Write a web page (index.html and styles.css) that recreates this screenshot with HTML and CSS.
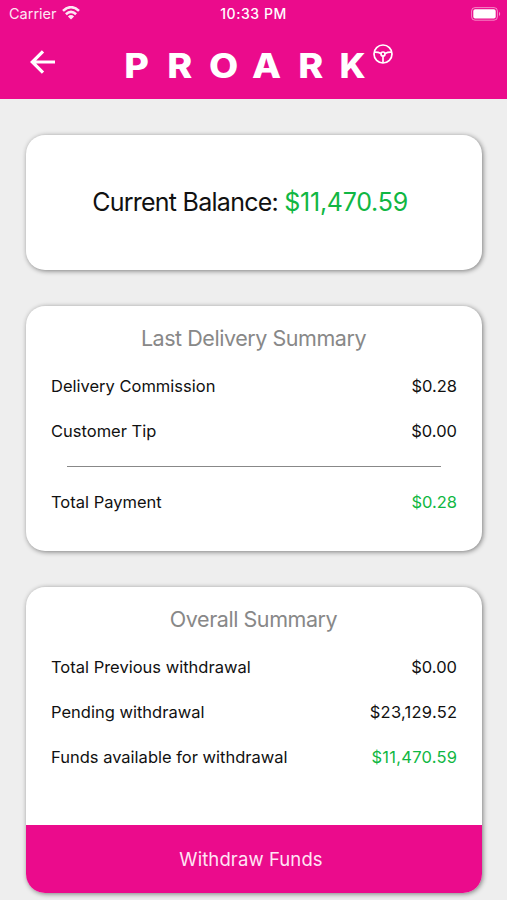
FILE: index.html
```html
<!DOCTYPE html>
<html lang="en">
<head>
<meta charset="utf-8">
<meta name="viewport" content="width=device-width, initial-scale=1">
<title>Proark</title>
<link rel="stylesheet" href="styles.css">
</head>
<body>
<header class="header">
  <div class="status">
    <div class="carrier"><span>Carrier</span>
      <svg class="wifi" width="18" height="14" viewBox="0 0 18 14" fill="none" stroke="#fff" stroke-width="2.6"><path d="M1 4.9Q9-2.5 17 4.9M3.9 8.2Q9 3.6 14.1 8.2"/><path d="M9 13.6 5.9 10.4Q9 7.8 12.1 10.4Z" fill="#fff" stroke="none"/></svg>
    </div>
    <div class="time">10:33 PM</div>
    <svg class="battery" width="30" height="14" viewBox="0 0 30 14"><rect x=".6" y=".6" width="25.8" height="12.6" rx="3.4" fill="none" stroke="#fff" stroke-opacity=".5"/><rect x="2.3" y="2.3" width="22.4" height="9.2" rx="1.8" fill="#fff"/><path d="M28 4.8q2.4 2.2 0 4.4z" fill="#fff" fill-opacity=".55"/></svg>
  </div>
  <div class="nav">
    <svg class="back" width="26" height="24" viewBox="0 0 26 24" fill="none" stroke="#fff" stroke-width="3.2"><path d="M25 12H2.5M13 1.3 2.3 12 13 22.7"/></svg>
    <div class="logo"><span>P</span><span>R</span><span>O</span><span>A</span><span>R</span><span>K</span></div>
    <svg class="wheel" width="20" height="20" viewBox="0 0 20 20" fill="none" stroke="#fff" stroke-width="1.7"><circle cx="10" cy="10" r="9"/><circle cx="10" cy="10" r="2"/><path d="M1.3 8.2Q5 8 8 9.5M18.7 8.2Q15 8 12 9.5M10 12V19"/></svg>
  </div>
</header>
<main class="content">
  <section class="card balance"><p>Current Balance: <span class="green">$11,470.59</span></p></section>
  <section class="card delivery">
    <h2>Last Delivery Summary</h2>
    <div class="row"><span>Delivery Commission</span><span class="amount">$0.28</span></div>
    <div class="row"><span>Customer Tip</span><span class="amount">$0.00</span></div>
    <hr>
    <div class="row"><span>Total Payment</span><span class="amount green">$0.28</span></div>
  </section>
  <section class="card overall">
    <h2>Overall Summary</h2>
    <div class="row"><span>Total Previous withdrawal</span><span class="amount">$0.00</span></div>
    <div class="row"><span>Pending withdrawal</span><span class="amount wide">$23,129.52</span></div>
    <div class="row"><span>Funds available for withdrawal</span><span class="amount wide green">$11,470.59</span></div>
    <button class="withdraw">Withdraw Funds</button>
  </section>
</main>
</body>
</html>
```
FILE: styles.css
```css
* { box-sizing: border-box; }
body { margin: 0; height: 900px; overflow: hidden; background: #eee; color: #111; font-family: Inter, "Liberation Sans", sans-serif; }
svg { display: block; flex: none; }
.header { height: 98.5px; background: #eb0b8c; color: #fff; }
.status { height: 28px; padding: 0 6px 0 9px; display: grid; grid-template-columns: 1fr auto 1fr; align-items: center; font-size: 14px; line-height: 28px; }
.carrier { display: flex; align-items: center; gap: 6px; font-size: 14.5px; opacity: .9; }
.wifi { margin: -2px 0 0 -1px; }
.time { margin-right: 3px; font-weight: 500; font-size: 14px; letter-spacing: .55px; }
.battery { justify-self: end; margin-top: -1px; }
.nav { height: 70px; padding-left: 30px; display: flex; align-items: flex-start; }
.back { margin-top: 22px; }
.logo { display: grid; grid-template-columns: repeat(6, 43.4px); margin: 18px -2.4px 0 59px; font-size: 33.5px; line-height: 40px; font-weight: 800; text-align: center; }
.logo span { transform: scaleX(1.13); }
.logo span:last-child { transform: translateX(-1px) scaleX(1.06); }
.wheel { margin-top: 16px; }
.content { padding: 36.5px 25px 0 26px; display: flex; flex-direction: column; gap: 36px; }
.card { border-radius: 19px; background: #fff; box-shadow: 1px 1px 5px rgba(0, 0, 0, .48); overflow: hidden; }
.balance { height: 135px; display: flex; align-items: center; justify-content: center; padding: 0 8px 1px 0; font-size: 25px; letter-spacing: -.74px; }
.balance p { margin: 0; white-space: nowrap; }
.balance .green { letter-spacing: -.26px; }
.green { color: #10b743; }
.delivery { height: 245px; }
.overall { height: 306px; display: flex; flex-direction: column; }
h2 { margin: 0; padding: 12px 1px 0 0; height: 58px; text-align: center; color: #888; font-size: 21.5px; line-height: 40px; font-weight: 400; letter-spacing: -.45px; }
.row { height: 45px; padding: 0 25px; display: flex; justify-content: space-between; font-size: 16.5px; line-height: 45px; }
.wide { letter-spacing: .25px; margin-right: -.25px; }
hr { width: 374px; height: 1px; border: 0; margin: 12px auto 13px; background: #888; }
.withdraw { margin-top: auto; height: 68px; border: 0; padding: 0 6px 0 0; background: #eb0b8c; color: #ffe4f4; font: 18.5px/67px Inter, "Liberation Sans", sans-serif; letter-spacing: .1px; }
```
